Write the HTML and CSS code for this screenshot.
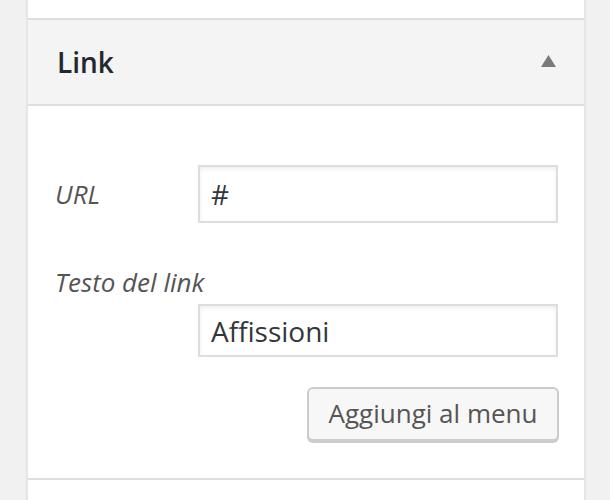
FILE: index.html
```html
<!DOCTYPE html>
<html lang="it">
<head>
<meta charset="utf-8">
<title>Link</title>
<link rel="stylesheet" href="styles.css">
</head>
<body>
<div class="panel">
  <div class="prev-section"></div>
  <div class="section-title">
    <h3 class="title">Link</h3>
    <svg class="arrow" width="15" height="12" viewBox="0 0 15 12" aria-hidden="true"><polygon points="7.5,0 15,12 0,12" fill="#7a7a7a"/></svg>
  </div>
  <div class="section-body">
    <div class="form-grid">
      <label class="label label-url" for="url">URL</label>
      <input class="textbox textbox-url" id="url" type="text" value="#">
      <label class="label label-wide" for="name">Testo del link</label>
      <input class="textbox textbox-name" id="name" type="text" value="Affissioni">
    </div>
    <div class="actions">
      <button class="button" type="button">Aggiungi al menu</button>
    </div>
  </div>
  <div class="next-section"></div>
</div>
</body>
</html>
```

FILE: styles.css
```css
html, body {
  margin: 0;
  padding: 0;
}

body {
  background: #f1f1f1;
  font-family: "Open Sans", "Noto Sans", sans-serif;
  height: 500px;
  overflow: hidden;
}

.panel {
  margin-left: 26px;
  width: 556px;
  border-left: 2px solid #e5e5e5;
  border-right: 2px solid #e5e5e5;
  background: #fff;
  min-height: 500px;
}

.prev-section {
  height: 18px;
  background: #fff;
  border-bottom: 2px solid #dedede;
}

.section-title {
  height: 84px;
  background: #f4f4f4;
  border-bottom: 2px solid #dedede;
  display: flex;
  align-items: center;
  justify-content: space-between;
  padding: 0 28px 0 29px;
}

.title {
  margin: 0;
  font-size: 28px;
  font-weight: 600;
  color: #23282d;
  line-height: 36px;
}

.arrow {
  display: block;
  margin-top: -2px;
}

.section-body {
  padding: 59px 26px 37px 27px;
  border-bottom: 2px solid #dedede;
}

.form-grid {
  display: grid;
  grid-template-columns: 143px 360px;
  align-items: center;
}

.label {
  font-style: italic;
  font-size: 26px;
  color: #555;
  line-height: 36px;
}

.label-wide {
  grid-column: 1 / 3;
  margin-top: 41px;
  margin-bottom: 4px;
}

.textbox {
  grid-column: 2;
  box-sizing: border-box;
  width: 360px;
  margin: 0;
  border: 2px solid #dddddd;
  background: #fff;
  box-shadow: inset 0 2px 4px rgba(0, 0, 0, 0.07);
  font-family: "Open Sans", "Noto Sans", sans-serif;
  font-size: 28px;
  color: #32373c;
  padding: 0 11px;
  outline: none;
}

.textbox-url {
  height: 58px;
}

.textbox-name {
  height: 53px;
}

.actions {
  display: flex;
  justify-content: flex-end;
  margin-top: 30px;
  margin-right: -1px;
}

.button {
  box-sizing: border-box;
  width: 252px;
  height: 54px;
  border: 2px solid #cccccc;
  border-radius: 6px;
  background: #f7f7f7;
  box-shadow: 0 2px 0 #cccccc;
  font-family: "Open Sans", "Noto Sans", sans-serif;
  font-size: 26px;
  color: #555;
  padding: 0 0 2px;
  margin: 0;
}

.next-section {
  height: 40px;
  background: #fff;
}
```
